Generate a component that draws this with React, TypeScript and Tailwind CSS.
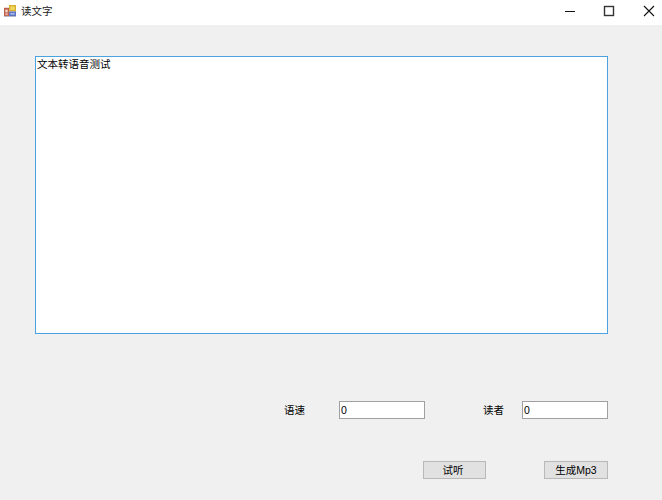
export default function App() {
  return (
    <div className="w-[662px] h-[500px] overflow-hidden flex flex-col bg-[#f0f0f0] text-[10.5px] leading-[14px] text-black font-['Liberation_Sans','Noto_Sans_CJK_SC',sans-serif]">
      <header className="h-[25px] shrink-0 bg-white flex items-center pb-[3px]">
        <svg className="ml-[4px] w-[12px] h-[12px] shrink-0" viewBox="0 0 13 13">
          <rect x="0" y="3" width="5.5" height="9" fill="#c0604c" />
          <rect x="1.5" y="5" width="2.5" height="3" fill="#f2dcd0" />
          <rect x="1.5" y="9" width="2.5" height="2" fill="#e8b8a8" />
          <rect x="5.5" y="0" width="7.5" height="7" fill="#d8b030" />
          <rect x="7" y="1.5" width="4.5" height="4" fill="#f0d860" />
          <rect x="5.5" y="7" width="7.5" height="5" fill="#5a70c0" />
          <rect x="7" y="8.5" width="4.5" height="2" fill="#a8b8e8" />
          <rect x="0" y="12" width="13" height="1" fill="#b0b4c8" />
        </svg>
        <span className="ml-[5px] text-[#222]">读文字</span>
        <div className="ml-auto flex items-center">
          <svg className="w-[12px] h-[12px] mr-[27px]" viewBox="0 0 12 12"><path d="M1 6.5H11" stroke="#111" strokeWidth="1" /></svg>
          <svg className="w-[12px] h-[12px] mr-[28px]" viewBox="0 0 12 12"><rect x="1.5" y="1.5" width="9" height="9" fill="none" stroke="#333" strokeWidth="1.4" /></svg>
          <svg className="w-[12px] h-[12px] mr-[7px]" viewBox="0 0 12 12"><path d="M1 1L11 11M11 1L1 11" stroke="#111" strokeWidth="1.1" /></svg>
        </div>
      </header>
      <main className="flex-1 pl-[35px] pt-[31px]">
        <div className="w-[573px] h-[278px] bg-white border border-[#4aa3df] pl-[1px]">文本转语音测试</div>
        <div className="mt-[67px] flex items-center h-[18px]">
          <span className="ml-[249px] w-[55px] pb-[1px]">语速</span>
          <input readOnly value="0" className="w-[86px] h-[18px] bg-white border border-[#a0a0a0] px-[1px] text-[10.5px] outline-none" />
          <span className="ml-[58px] w-[39px] pb-[1px]">读者</span>
          <input readOnly value="0" className="w-[86px] h-[18px] bg-white border border-[#a0a0a0] px-[1px] text-[10.5px] outline-none" />
        </div>
        <div className="mt-[42px] flex">
          <button className="ml-[388px] w-[63px] h-[18px] bg-[#e1e1e1] border border-[#b8b8b8] text-[10.5px] pr-[3px] flex items-center justify-center">试听</button>
          <button className="ml-[58px] w-[64px] h-[18px] bg-[#e1e1e1] border border-[#b8b8b8] text-[10.5px] flex items-center justify-center">生成Mp3</button>
        </div>
      </main>
    </div>
  );
}
